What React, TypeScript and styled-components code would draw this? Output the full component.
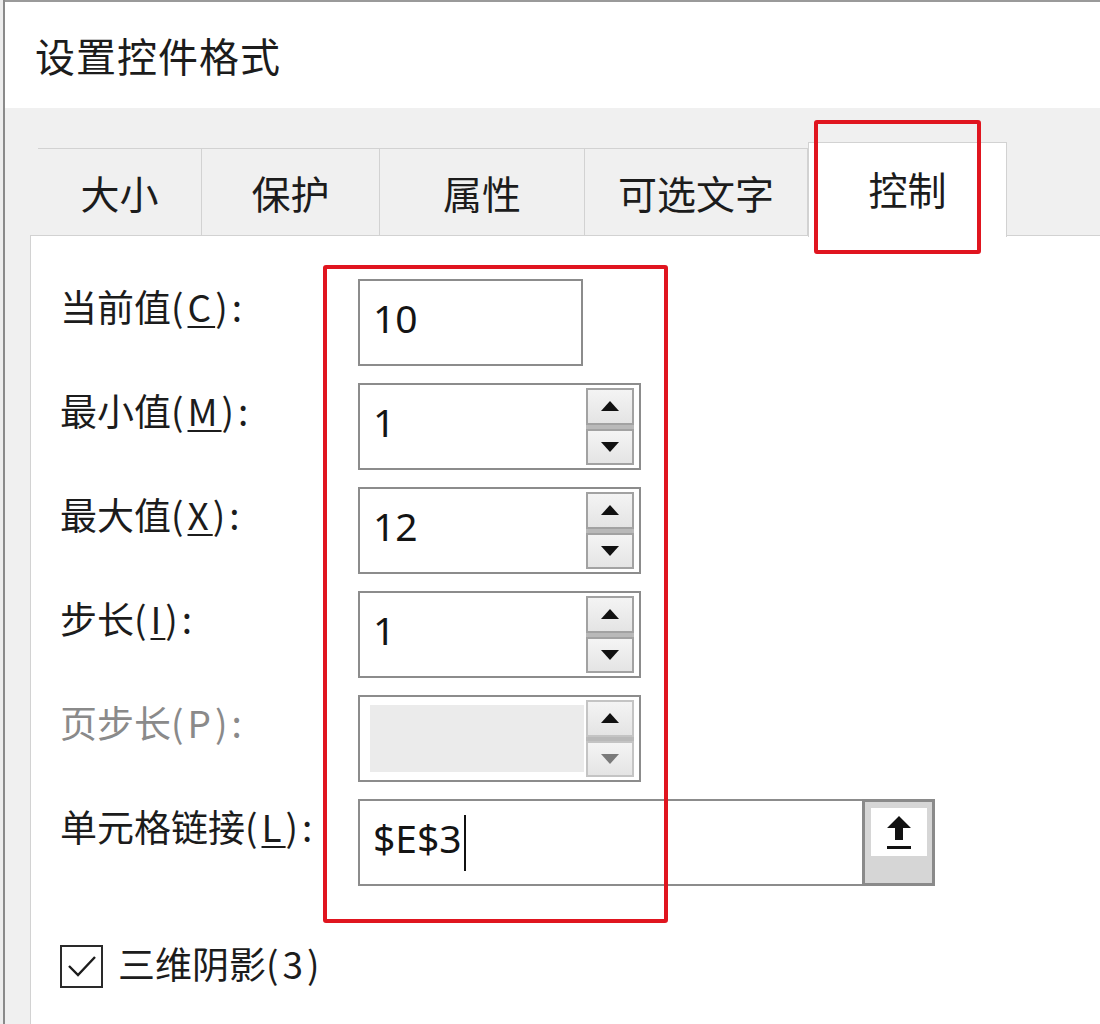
import styled, { createGlobalStyle } from "styled-components";

const GlobalStyle = createGlobalStyle`
    html, body {
        margin: 0;
        padding: 0;
        background: #ffffff;
    }
`

const CJK = `"Noto Sans CJK SC", "Noto Sans", sans-serif`
const NUM = `"Noto Sans", "Open Sans", sans-serif`

const Page = styled.div`
    position: relative;
    width: 1100px;
    height: 1024px;
    overflow: hidden;
    display: flex;
    font-family: ${CJK};
    color: #1c1c1c;
`

const SheetEdge = styled.div`
    width: 3px;
    background: #ededed;
    border-right: 2px solid #8a8a8a;
`

const Dialog = styled.div`
    flex: 1;
    display: flex;
    flex-direction: column;
    border-top: 2px solid #9a9a9a;
`

const TitleBar = styled.div`
    height: 106px;
    display: flex;
    align-items: center;
    padding-left: 30px;
    background: #ffffff;
    font-size: 40px;
    letter-spacing: 1px;
`

const Body = styled.div`
    flex: 1;
    display: flex;
    flex-direction: column;
    background: #f0f0f0;
    padding-left: 25px;
`

const TabRow = styled.div`
    display: flex;
    align-items: flex-end;
    margin-top: 40px;
    padding-left: 8px;
    height: 87px;
`

const Tab = styled.div<{ $w: number; $active?: boolean; $first?: boolean }>`
    width: ${({ $w }) => $w}px;
    height: ${({ $active }) => ($active ? 95 : 87)}px;
    margin-bottom: ${({ $active }) => ($active ? -2 : 0)}px;
    box-sizing: border-box;
    display: flex;
    align-items: center;
    justify-content: center;
    padding-bottom: ${({ $active }) => ($active ? 4 : 0)}px;
    font-size: 39px;
    background: ${({ $active }) => ($active ? "#ffffff" : "#f0f0f0")};
    border-top: 1px solid #d2d2d2;
    border-right: 1px solid #d2d2d2;
    border-left: ${({ $first, $active }) => ($first ? "none" : $active ? "1px solid #d2d2d2" : "none")};
    position: relative;
    z-index: ${({ $active }) => ($active ? 2 : 1)};
`

const Panel = styled.div`
    flex: 1;
    background: #ffffff;
    border-top: 1px solid #d2d2d2;
    border-left: 1px solid #d2d2d2;
    padding: 43px 0 0 29px;
    display: flex;
    flex-direction: column;
`

const Form = styled.div`
    display: grid;
    grid-template-columns: 298px auto;
    grid-auto-rows: 87px;
    row-gap: 17px;
    justify-items: start;
    align-items: center;
`

const Label = styled.div<{ $disabled?: boolean }>`
    font-size: 37px;
    padding-bottom: 34px;
    white-space: nowrap;
    color: ${({ $disabled }) => ($disabled ? "#8a8a8a" : "#1c1c1c")};
`

// the access key part, e.g. "(C):", drawn a little wider as in the dialog font
const Key = styled.span`
    letter-spacing: 4px;

    u {
        text-decoration-thickness: 2px;
        text-underline-offset: 4px;
    }
`

const Field = styled.div<{ $w: number }>`
    width: ${({ $w }) => $w}px;
    height: 87px;
    box-sizing: border-box;
    border: 2px solid #8c8c8c;
    display: flex;
    align-items: stretch;
    background: #ffffff;
`

const Value = styled.div`
    flex: 1;
    display: flex;
    align-items: center;
    padding: 0 0 10px 13px;
    font-family: ${NUM};
    font-size: 39px;
    color: #141414;
`

const DisabledFill = styled.div`
    flex: 1;
    margin: 8px 0 8px 10px;
    background: #ebebeb;
`

const Caret = styled.span`
    display: inline-block;
    width: 2px;
    height: 56px;
    margin: 10px 0 0 2px;
    background: #111111;
`

const Spinner = styled.div`
    width: 48px;
    margin: 3px 5px 3px 2px;
    display: flex;
    flex-direction: column;
    background: #b9b9b9;
    gap: 4px;
`

const SpinButton = styled.div<{ $disabled?: boolean }>`
    flex: 1;
    box-sizing: border-box;
    border: 2px solid ${({ $disabled }) => ($disabled ? "#c4c4c4" : "#a2a2a2")};
    background: linear-gradient(#f4f4f4, #e4e4e4);
    display: flex;
    align-items: center;
    justify-content: center;
`

const PickButton = styled.div`
    width: 73px;
    margin: -2px -2px -2px 0;
    box-sizing: border-box;
    border: 3px solid #8a8a8a;
    background: #d6d6d6;
    display: flex;
    flex-direction: column;
    align-items: center;
    padding-top: 6px;
`

const PickFace = styled.div`
    width: 56px;
    height: 48px;
    background: #ffffff;
    display: flex;
    align-items: center;
    justify-content: center;
`

const CheckRow = styled.label`
    display: flex;
    align-items: center;
    gap: 15px;
    margin-top: 50px;
    font-size: 37px;
`

const CheckBox = styled.div`
    width: 43px;
    height: 43px;
    box-sizing: border-box;
    border: 2px solid #2a2a2a;
    display: flex;
    align-items: center;
    justify-content: center;
`

const CheckText = styled.span`
    padding-bottom: 6px;
`

const Highlight = styled.div<{ $x: number; $y: number; $w: number; $h: number }>`
    position: absolute;
    left: ${({ $x }) => $x}px;
    top: ${({ $y }) => $y}px;
    width: ${({ $w }) => $w}px;
    height: ${({ $h }) => $h}px;
    box-sizing: border-box;
    border: 4px solid #e0151f;
    border-radius: 3px;
    z-index: 5;
    pointer-events: none;
`

const Arrow = ({ up, disabled }: { up?: boolean; disabled?: boolean }) => (
    <svg width="18" height="10" viewBox="0 0 18 10">
        <polygon
            points={up ? "9,0 18,10 0,10" : "0,0 18,0 9,10"}
            fill={disabled ? "#7a7a7a" : "#111111"}
        />
    </svg>
)

const Spin = ({ disabled }: { disabled?: boolean }) => (
    <Spinner>
        <SpinButton $disabled={disabled}><Arrow up /></SpinButton>
        <SpinButton $disabled={disabled}><Arrow disabled={disabled} /></SpinButton>
    </Spinner>
)

const tabs = [
    { name: "大小", w: 164 },
    { name: "保护", w: 178 },
    { name: "属性", w: 205 },
    { name: "可选文字", w: 223 },
    { name: "控制", w: 199, active: true },
]

export default function App() {
    return (
        <Page>
            <GlobalStyle />
            <SheetEdge />
            <Dialog>
                <TitleBar>设置控件格式</TitleBar>
                <Body>
                    <TabRow>
                        {tabs.map((t, i) => (
                            <Tab key={t.name} $w={t.w} $active={t.active} $first={i === 0}>
                                {t.name}
                            </Tab>
                        ))}
                    </TabRow>
                    <Panel>
                        <Form>
                            <Label>当前值<Key>(<u>C</u>):</Key></Label>
                            <Field $w={225}><Value>10</Value></Field>

                            <Label>最小值<Key>(<u>M</u>):</Key></Label>
                            <Field $w={283}><Value>1</Value><Spin /></Field>

                            <Label>最大值<Key>(<u>X</u>):</Key></Label>
                            <Field $w={283}><Value>12</Value><Spin /></Field>

                            <Label>步长<Key>(<u>I</u>):</Key></Label>
                            <Field $w={283}><Value>1</Value><Spin /></Field>

                            <Label $disabled>页步长<Key>(P):</Key></Label>
                            <Field $w={283}><DisabledFill /><Spin disabled /></Field>

                            <Label>单元格链接<Key>(<u>L</u>):</Key></Label>
                            <Field $w={577}>
                                <Value>$E$3<Caret /></Value>
                                <PickButton>
                                    <PickFace>
                                        <svg width="30" height="36" viewBox="0 0 30 36">
                                            <path d="M15 2 L27 14 L19 14 L19 26 L11 26 L11 14 L3 14 Z" fill="#111111" />
                                            <rect x="3" y="32" width="24" height="3" fill="#111111" />
                                        </svg>
                                    </PickFace>
                                </PickButton>
                            </Field>
                        </Form>
                        <CheckRow>
                            <CheckBox>
                                <svg width="32" height="26" viewBox="0 0 32 26">
                                    <polyline points="3,13 12,22 29,4" fill="none" stroke="#1c1c1c" strokeWidth="2.4" />
                                </svg>
                            </CheckBox>
                            <CheckText>三维阴影<Key>(3)</Key></CheckText>
                        </CheckRow>
                    </Panel>
                </Body>
            </Dialog>
            <Highlight $x={814} $y={120} $w={167} $h={134} />
            <Highlight $x={323} $y={265} $w={345} $h={658} />
        </Page>
    )
}
